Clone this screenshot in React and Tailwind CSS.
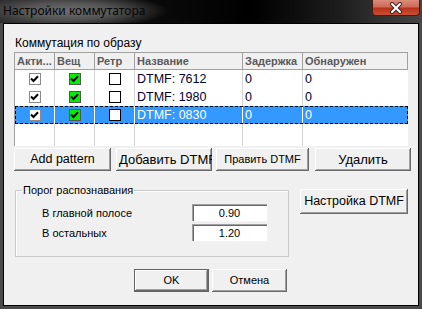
import React from 'react';

const rows = [
  { name: 'DTMF: 7612', delay: '0', found: '0' },
  { name: 'DTMF: 1980', delay: '0', found: '0' },
  { name: 'DTMF: 0830', delay: '0', found: '0', selected: true },
];

const Tick = () => (
  <svg width="9" height="8" viewBox="0 0 9 8">
    <path d="M1 3.5 L3.5 6 L8 1.2" stroke="black" strokeWidth="2" fill="none" />
  </svg>
);

const Box = ({ kind }) => {
  if (kind === 'on')
    return (
      <div className="w-[12px] h-[12px] bg-white border border-[#8a8a8a] flex items-center justify-center">
        <Tick />
      </div>
    );
  if (kind === 'green')
    return (
      <div className="w-[12px] h-[12px] bg-[#00f000] border border-[#555] flex items-center justify-center">
        <Tick />
      </div>
    );
  return <div className="w-[12px] h-[12px] bg-white border border-black" />;
};

const Btn = ({ children, className = '' }) => (
  <button
    className={`h-[23px] bg-[#f0f0f0] text-black shadow-[inset_-1px_-1px_0_#696969,inset_1px_1px_0_#ffffff,inset_-2px_-2px_0_#a0a0a0] flex items-center justify-center whitespace-nowrap overflow-hidden ${className}`}
  >
    {children}
  </button>
);

const Field = ({ value }) => (
  <div className="w-[76px] h-[18px] bg-white shadow-[inset_1px_1px_0_#a0a0a0,inset_2px_2px_0_#696969] border-b border-r border-[#f4f4f4] flex items-center justify-center text-[11px] pt-[1px]">
    {value}
  </div>
);

export default function App() {
  const head = 'text-[11px] font-bold text-[#5a5a5a] px-[2px] border-r border-[#a0a0a0] leading-[16px] whitespace-nowrap overflow-hidden';
  return (
    <div
      className="w-[422px] h-[309px] bg-[#4a4a4a] flex flex-col overflow-hidden"
      style={{ fontFamily: '"Liberation Sans", Arial, sans-serif' }}
    >
      {/* title bar */}
      <div className="h-[23px] shrink-0 flex items-start justify-between bg-[radial-gradient(ellipse_100px_18px_at_68px_11px,#6e6e6e_0%,#555_45%,transparent_100%),linear-gradient(90deg,#222_0%,#0a0a0a_35%,#000_60%,#1c1c1c_80%,#454545_100%)]">
        <div
          className="pl-[3px] pt-[3px] text-[12px] leading-[16px] text-[#050505]"
          style={{ fontFamily: '"Noto Sans", sans-serif' }}
        >
          Настройки коммутатора
        </div>
        <div className="mr-[2px] w-[48px] h-[16px] rounded-b-[4px] border border-t-0 border-[#4a1a10] bg-[linear-gradient(180deg,#dc8c7c_0%,#cf6a55_45%,#b8321c_55%,#c9502e_100%)] flex items-center justify-center">
          <svg width="14" height="12" viewBox="0 0 14 12">
            <path d="M3 2 L11 10 M11 2 L3 10" stroke="#3a2a2a" strokeWidth="4" strokeLinecap="round" />
            <path d="M3 2 L11 10 M11 2 L3 10" stroke="#ffffff" strokeWidth="2" strokeLinecap="round" />
          </svg>
        </div>
      </div>

      {/* client area */}
      <div className="flex-1 mx-[3px] mb-[3px] border border-black bg-[#f0f0f0] flex flex-col pl-[10px] pt-[12px] text-black">
        <div className="text-[12px] leading-[14px] h-[14px] ml-[1px]">Коммутация по образу</div>

        <div className="mt-[2px] w-[394px] h-[94px] bg-white border-l border-[#a0a0a0] flex flex-col">
          <div className="grid grid-cols-[40px_40px_40px_108px_60px_105px] h-[18px] bg-[#f0f0f0] border-y border-[#a0a0a0]">
            <div className={head}>Акти...</div>
            <div className={head}>Вещ</div>
            <div className={head}>Ретр</div>
            <div className={head}>Название</div>
            <div className={head}>Задержка</div>
            <div className={head}>Обнаружен</div>
          </div>
          {rows.map((r) => {
            const line = r.selected ? 'border-white' : 'border-[#d4d4d4]';
            const cell = `border-r ${line} flex items-center`;
            return (
              <div
                key={r.name}
                className={`grid grid-cols-[40px_40px_40px_108px_60px_105px] h-[18px] text-[12.5px] ${
                  r.selected
                    ? 'bg-[#3399ff] text-white outline outline-1 outline-dashed outline-black -outline-offset-1'
                    : 'text-[#000033]'
                }`}
              >
                <div className={`${cell} justify-center`}><Box kind="on" /></div>
                <div className={`${cell} justify-center`}><Box kind="green" /></div>
                <div className={`${cell} justify-center`}><Box kind="off" /></div>
                <div className={`${cell} pl-[2px]`}>{r.name}</div>
                <div className={`${cell} pl-[2px]`}>{r.delay}</div>
                <div className="flex items-center pl-[2px]">{r.found}</div>
              </div>
            );
          })}
          <div className="flex-1 grid grid-cols-[40px_40px_40px_108px_60px_105px]">
            <div className="border-r border-[#d4d4d4]" />
            <div className="border-r border-[#d4d4d4]" />
            <div className="border-r border-[#d4d4d4]" />
            <div className="border-r border-[#d4d4d4]" />
            <div className="border-r border-[#d4d4d4]" />
            <div />
          </div>
        </div>

        <div className="mt-[2px] flex">
          <Btn className="w-[97px] text-[12.5px]">Add pattern</Btn>
          <Btn className="ml-[5px] w-[96px] text-[13px] justify-start pl-[3px]">Добавить DTMF</Btn>
          <Btn className="ml-[4px] w-[93px] text-[11px]">Править DTMF</Btn>
          <Btn className="ml-[6px] w-[96px] text-[13px]">Удалить</Btn>
        </div>

        <div className="mt-[13px] flex items-start">
          <fieldset className="ml-[1px] w-[274px] h-[73px] border border-[#c8c8c8] shadow-[inset_1px_1px_0_#fff] pl-[26px]">
            <legend className="-ml-[20px] px-[1px] text-[11px] leading-[13px]">Порог распознавания</legend>
            <div className="mt-[7px] flex items-center h-[18px]">
              <div className="w-[150px] text-[11px]">В главной полосе</div>
              <Field value="0.90" />
            </div>
            <div className="mt-[2px] flex items-center h-[18px]">
              <div className="w-[150px] text-[11px]">В остальных</div>
              <Field value="1.20" />
            </div>
          </fieldset>
          <Btn className="ml-[11px] mt-[5px] w-[108px] h-[25px] text-[12.5px]">Настройка DTMF</Btn>
        </div>

        <div className="mt-[12px] flex">
          <Btn className="ml-[120px] w-[75px] text-[11px] border border-[#646464]">OK</Btn>
          <Btn className="ml-[3px] w-[75px] text-[11px]">Отмена</Btn>
        </div>
      </div>
    </div>
  );
}
